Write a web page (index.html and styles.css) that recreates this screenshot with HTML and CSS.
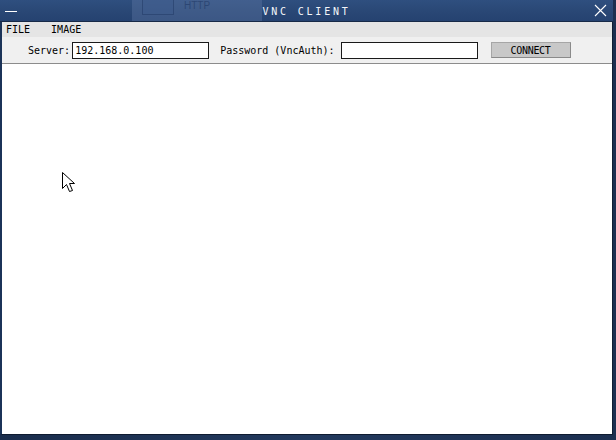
FILE: index.html
```html
<!DOCTYPE html>
<html>
<head>
<meta charset="utf-8">
<link rel="stylesheet" href="styles.css">
</head>
<body>
<div class="desktop">
  <div class="window">
    <div class="titlebar">
      <div class="ghost"><span class="ghost-icon"></span><span class="ghost-text">HTTP</span></div>
      <span class="minimize"></span>
      <span class="title">VNC CLIENT</span>
      <svg class="close" width="13" height="13" viewBox="0 0 13 13"><path d="M1 1 L12 12 M12 1 L1 12" stroke="#ffffff" stroke-width="1.1" fill="none"/></svg>
    </div>
    <div class="menubar">
      <span class="menu-item">FILE</span>
      <span class="menu-item">IMAGE</span>
    </div>
    <div class="toolbar">
      <label class="lbl">Server:</label>
      <div class="field field-server">192.168.0.100</div>
      <label class="lbl lbl-pass">Password (VncAuth):</label>
      <div class="field field-pass"></div>
      <button class="connect">CONNECT</button>
    </div>
    <div class="content">
      <svg class="cursor" width="14" height="22" viewBox="0 0 14 22"><path d="M0.5 0.5 L0.5 16.5 L4.5 12.5 L7.5 19.5 L10.5 18.5 L7.5 11.5 L12.5 11.5 Z" fill="#ffffff" stroke="#000000" stroke-width="1"/></svg>
    </div>
  </div>
</div>
</body>
</html>
```

FILE: styles.css
```css
html, body {
  margin: 0;
  padding: 0;
}
body {
  width: 616px;
  height: 440px;
  overflow: hidden;
  background: #1d3152;
  font-family: "DejaVu Sans Mono", "Liberation Mono", monospace;
  font-size: 10px;
}
.desktop {
  width: 616px;
  height: 440px;
  background: linear-gradient(90deg, #1a2d4c 0%, #22395d 50%, #1c2f50 100%);
}
.window {
  width: 610px;
  height: 434px;
  border-left: 2px solid #1b3358;
  border-right: 1px solid #101d33;
  border-bottom: 1px solid #0f1b30;
  display: flex;
  flex-direction: column;
  background: #ffffff;
}
.titlebar {
  position: relative;
  height: 21px;
  margin-left: -2px;
  margin-right: -1px;
  border-bottom: 1px solid #182a48;
  background: linear-gradient(180deg, #2f4f7f 0%, #2a4876 50%, #254270 100%);
  display: flex;
  align-items: center;
  justify-content: center;
  color: #ffffff;
}
.ghost {
  position: absolute;
  left: 132px;
  top: 0;
  width: 130px;
  height: 21px;
  background: rgba(95, 120, 165, 0.4);
}
.ghost-icon {
  position: absolute;
  left: 10px;
  top: 0;
  width: 30px;
  height: 14px;
  border: 1px solid rgba(20, 40, 80, 0.35);
  border-top: none;
  background: rgba(60, 90, 140, 0.5);
}
.ghost-text {
  position: absolute;
  left: 52px;
  top: 0;
  font-family: "Liberation Sans", Arial, sans-serif;
  font-size: 10px;
  color: rgba(30, 55, 100, 0.6);
}
.minimize {
  position: absolute;
  left: 5px;
  top: 11px;
  width: 12px;
  height: 1px;
  background: #ffffff;
}
.title {
  font-size: 10px;
  letter-spacing: 2.8px;
  margin-left: 0;
  margin-top: 1px;
  color: #f4f6fa;
}
.close {
  position: absolute;
  right: 6px;
  top: 4px;
}
.menubar {
  height: 15px;
  background: #e5e5e5;
  display: flex;
  align-items: center;
  padding-left: 4px;
  gap: 21px;
  color: #000;
}
.toolbar {
  height: 26px;
  background: #f0f0f0;
  border-bottom: 1px solid #8c8c8c;
  display: flex;
  align-items: center;
  padding-left: 26px;
  color: #000;
}
.lbl {
  margin-right: 2px;
}
.lbl-pass {
  margin-left: 11px;
  margin-right: 6px;
}
.field {
  box-sizing: border-box;
  width: 137px;
  height: 17px;
  border: 1px solid #1a1a1a;
  background: #ffffff;
  padding-left: 2px;
  line-height: 15px;
}
.connect {
  box-sizing: border-box;
  margin-left: 13px;
  width: 80px;
  height: 16px;
  padding: 0;
  background: #c8c8c8;
  border: 1px solid #a6a6a6;
  border-right-color: #8a8a8a;
  border-bottom-color: #8a8a8a;
  font-family: "DejaVu Sans Mono", monospace;
  font-size: 10px;
  color: #000;
  letter-spacing: -0.3px;
}
.content {
  position: relative;
  flex: 1;
  background: #ffffff;
}
.cursor {
  position: absolute;
  left: 60px;
  top: 108px;
}
```
